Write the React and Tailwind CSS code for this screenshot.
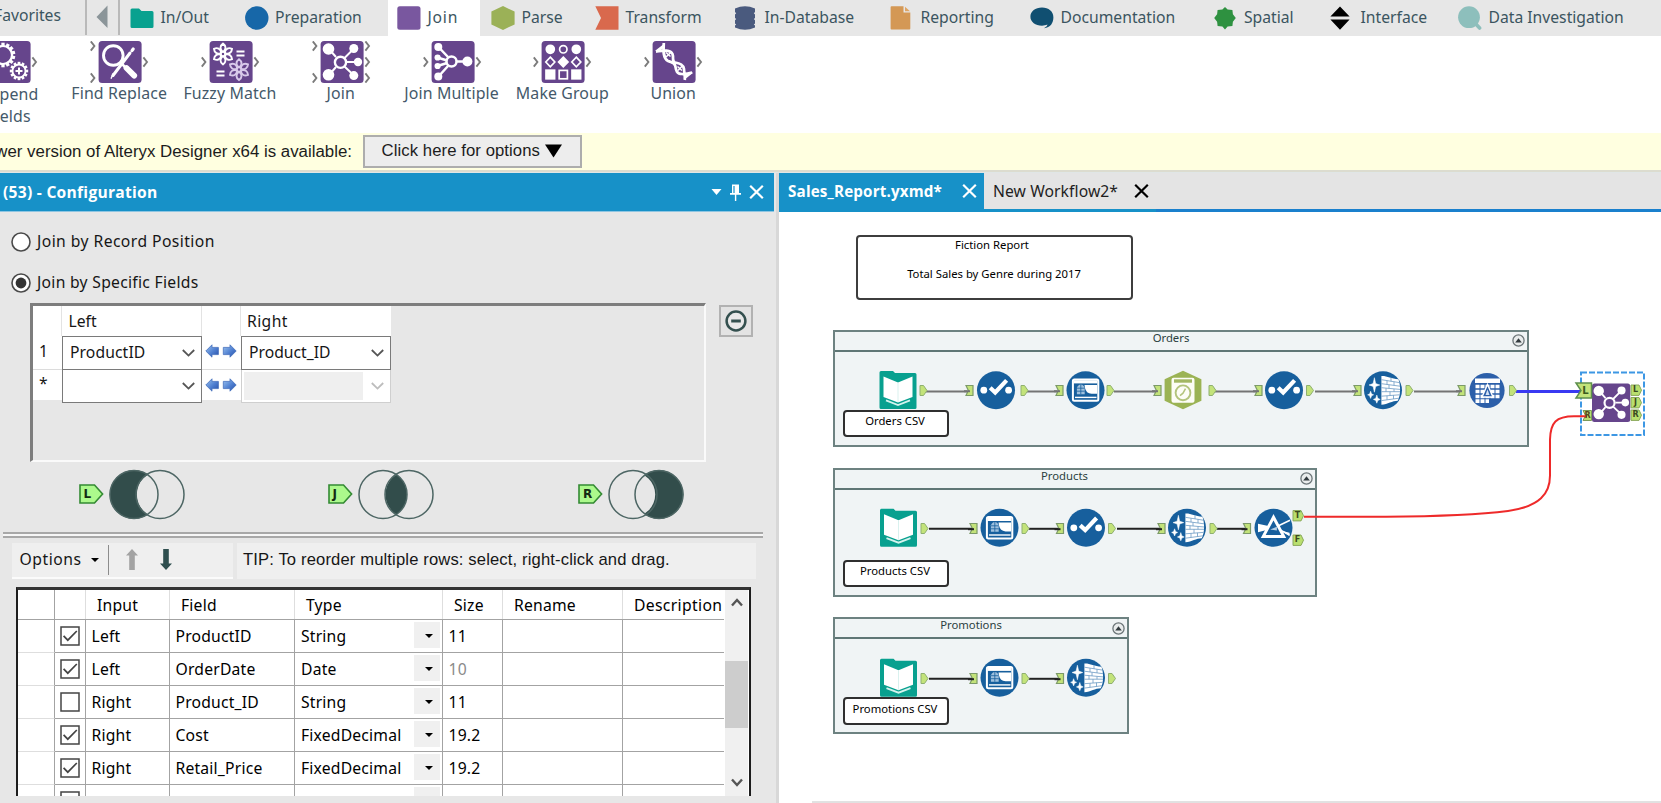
import React from "react";

/* ---------- category tab icons (24 x 24) ---------- */
const tabIcons = {
  inout: (
    <path d="M0.5 4 Q0.5 2.5 2 2.5 H9 L11.5 5 H22 Q23.5 5 23.5 6.5 V20.5 Q23.5 22 22 22 H2 Q0.5 22 0.5 20.5 Z" fill="#08a18f" />
  ),
  prep: <circle cx="11.8" cy="12" r="11.7" fill="#1767a8" />,
  join: <rect x="0.3" y="0.3" width="23.2" height="23.4" rx="2.5" fill="#79579f" />,
  parse: <path d="M12 0 L23.6 5.6 V18.4 L12 24 L0.4 18.4 V5.6 Z" fill="#9bb157" />,
  transform: <path d="M0.3 0.3 H23.5 V23.7 H0.3 L6 12 Z" fill="#d9694d" />,
  indb: (
    <path
      d="M1 2.5 Q11 -2 21 2.5 V6 L19.8 7.2 L21 8.4 V12 L19.8 13 L21 14.2 V17.4 L19.8 18.5 L21 19.6 V21.5 Q11 26 1 21.5 V19.6 L2.2 18.5 L1 17.4 V14.2 L2.2 13 L1 12 V8.4 L2.2 7.2 L1 6 Z"
      fill="#4a5a7e"
    />
  ),
  report: (
    <g>
      <path d="M0.6 1.2 Q0.6 0.3 1.5 0.3 H13.5 V6.6 H20.3 V22.6 Q20.3 23.6 19.4 23.6 H1.5 Q0.6 23.6 0.6 22.6 Z" fill="#d49855" />
      <path d="M15 0.8 L20 5.2 H15 Z" fill="#dfa565" />
    </g>
  ),
  doc: (
    <path d="M12 1.6 C18.6 1.6 23.4 5.4 23.4 11.2 C23.4 17 20.5 21.4 14 22.2 C16 21 17.4 20 17.4 18.6 C15.8 19.4 14 19.7 12 19.7 C5.4 19.7 0.4 16 0.4 10.8 C0.4 5.4 5.4 1.6 12 1.6 Z" fill="#104f71" />
  ),
  spatial: (
    <path
      d="M11 1 L13.6 3.6 L18.4 4 L18.9 8.2 L21.8 12 L18.9 15.8 L18.4 20 L13.6 20.6 L11 23.4 L8.4 20.6 L3.6 20 L3.1 15.8 L0.2 12 L3.1 8.2 L3.6 4 L8.4 3.6 Z"
      fill="#2e9140"
    />
  ),
  iface: <path d="M10 0.6 L19.6 10.4 H0.4 Z M0.4 13.6 H19.6 L10 23.8 Z" fill="#000" />,
  invest: (
    <g>
      <path d="M16 16 L21.6 22" stroke="#8dbfbc" strokeWidth="3.6" strokeLinecap="round" />
      <circle cx="11" cy="11.2" r="10.9" fill="#8dbfbc" />
    </g>
  ),
};

const tabs = [
  ["inout", "In/Out", "w-[114.5px]"],
  ["prep", "Preparation", "w-[152.5px]"],
  ["join", "Join", "w-[91.5px] mr-[2.5px] bg-white"],
  ["parse", "Parse", "w-[104px]"],
  ["transform", "Transform", "w-[139px]"],
  ["indb", "In-Database", "w-[156px]"],
  ["report", "Reporting", "w-[140px]"],
  ["doc", "Documentation", "w-[183.5px]"],
  ["spatial", "Spatial", "w-[116.5px]"],
  ["iface", "Interface", "w-[128px]"],
  ["invest", "Data Investigation", "w-[190px]"],
];

function CategoryBar() {
  return (
    <div className="flex h-9 bg-[#e7e7e7] text-[15.7px] text-[#3b5560]">
      <div className="flex h-8 w-[61px] shrink-0 items-center justify-end">Favorites</div>
      <div className="ml-6 h-[35px] w-[2px] shrink-0 bg-[#b9b9b9]" />
      <svg className="ml-[9px] mt-[5px] h-6 w-3 shrink-0" viewBox="0 0 12 24">
        <path d="M11.5 0.5 V23 L0.5 12 Z" fill="#8b9599" />
      </svg>
      <div className="ml-[10px] h-[35px] w-[2px] shrink-0 bg-[#b9b9b9]" />
      <div className="ml-[1px] flex">
        {tabs.map(([icon, label, cls]) => (
          <div key={icon} className={"flex h-9 shrink-0 items-center gap-[6.5px] whitespace-nowrap pl-[9px] " + cls}>
            <svg className="h-6 w-6 shrink-0" viewBox="0 0 24 24">
              {tabIcons[icon]}
            </svg>
            <span className={icon === "join" ? "tracking-[0.8px]" : ""}>{label}</span>
          </div>
        ))}
      </div>
    </div>
  );
}

/* ---------- tool glyphs, white on a 42 x 42 tile ---------- */
function Gear({ cx, cy, r, teeth, sw }) {
  const marks = [];
  for (let i = 0; i < teeth; i++) {
    marks.push(
      <rect
        key={i}
        x={cx - sw * 0.75}
        y={cy - r - sw * 1.5}
        width={sw * 1.5}
        height={sw * 1.8}
        fill="#fff"
        transform={`rotate(${(360 / teeth) * i} ${cx} ${cy})`}
      />
    );
  }
  return (
    <g>
      {marks}
      <circle cx={cx} cy={cy} r={r} fill="none" stroke="#fff" strokeWidth={sw} />
    </g>
  );
}

function Flower({ cx, cy, color }) {
  return (
    <g stroke={color} fill="none" strokeWidth="1.9">
      {[0, 60, 120, 180, 240, 300].map((a) => (
        <path
          key={a}
          d={`M${cx} ${cy - 10.4} C${cx + 3.4} ${cy - 8} ${cx + 3} ${cy - 5} ${cx + 0.8} ${cy - 2.6} H${cx - 0.8} C${cx - 3} ${cy - 5} ${cx - 3.4} ${cy - 8} ${cx} ${cy - 10.4} Z`}
          transform={`rotate(${a} ${cx} ${cy})`}
        />
      ))}
      <circle cx={cx} cy={cy} r="2.2" />
    </g>
  );
}

const joinGlyph = (
  <g stroke="#fff" strokeWidth="2" fill="#fff">
    <path d="M8 8 L15 16 M8 34 L15 26 M33 7.5 L23.5 17 M33 34.5 L23.5 25.5 M26 21 H36" fill="none" />
    <circle cx="19.5" cy="21.3" r="5.6" fill="none" strokeWidth="2.4" />
    <g stroke="none">
      <circle cx="7.5" cy="8" r="5.8" />
      <circle cx="7.5" cy="33.8" r="5.8" />
      <circle cx="32.8" cy="7.5" r="4.5" />
      <circle cx="37" cy="21" r="4.2" />
      <circle cx="32.8" cy="34.6" r="4.5" />
    </g>
  </g>
);

const glyphs = {
  append: (
    <g>
      <Gear cx={15} cy={14} r={9} teeth={14} sw={2.2} />
      <Gear cx={31} cy={30} r={6.5} teeth={12} sw={1.8} />
      <path d="M31 26.5 V33.5 M27.5 30 H34.5" stroke="#fff" strokeWidth="2" />
    </g>
  ),
  find: (
    <g fill="none" stroke="#fff" strokeLinecap="round">
      <circle cx="14.3" cy="14.5" r="9.8" strokeWidth="2.9" />
      <path d="M22 22 L26 26" strokeWidth="2.5" />
      <path d="M27.5 27 L35.2 34.6" strokeWidth="5.8" />
      <path d="M14 34.5 L31 12" strokeWidth="3" />
      <path d="M12.2 37.2 L14 32.8" strokeWidth="1.4" />
      <path d="M33 9.6 L34.2 8" strokeWidth="3.2" />
    </g>
  ),
  fuzzy: (
    <g>
      <Flower cx={13} cy={13} color="#fff" />
      <Flower cx={29} cy={28.6} color="#d8c9ea" />
      <path d="M26.5 10.5 H34.5 M26.5 14.5 H34.5 M6.5 30.5 H14.5 M6.5 34.5 H14.5" stroke="#fff" strokeWidth="2" />
    </g>
  ),
  join: joinGlyph,
  multi: (
    <g stroke="#fff" strokeWidth="2.5" fill="#fff">
      <path d="M6.5 6 L16 16 M5.5 16.5 L15 19.5 M5.5 25 L15 22 M6.5 35.5 L16 25 M25 20.5 H34" fill="none" />
      <circle cx="19.5" cy="20.5" r="5" fill="none" />
      <g stroke="none">
        <circle cx="6.3" cy="6" r="4" />
        <circle cx="5.6" cy="16.5" r="3.1" />
        <circle cx="5.6" cy="25" r="3.1" />
        <circle cx="6.3" cy="35.6" r="4" />
        <circle cx="35.4" cy="20.5" r="5" />
      </g>
    </g>
  ),
  group: (
    <g fill="#fff" stroke="#fff" strokeWidth="1.7">
      <circle cx="8.3" cy="8.3" r="4" />
      <circle cx="21.3" cy="8.3" r="3.7" fill="none" />
      <circle cx="34.3" cy="8.3" r="4" />
      <path d="M8.3 16.2 L12.8 21 L8.3 25.8 L3.8 21 Z" fill="none" />
      <path d="M21.3 16.2 L26 21 L21.3 25.8 L16.6 21 Z" />
      <path d="M34.3 16.2 L38.8 21 L34.3 25.8 L29.8 21 Z" fill="none" />
      <rect x="4" y="29.2" width="8.6" height="8.6" />
      <rect x="17.2" y="29.4" width="8.2" height="8.4" fill="none" />
      <rect x="30" y="29.2" width="8.6" height="8.6" />
    </g>
  ),
  union: (
    <g fill="none" stroke="#fff" strokeWidth="2.7">
      <path d="M3 10.6 C8 10 17 7.5 19.5 13 C21 17 18.5 20 22 21.5 C26 22.5 30.5 23 31 28 C31.2 32 32.2 35 31.8 39" />
      <path d="M10.8 2 C10.2 10 10 17.5 15 20 C19 21.5 21.5 21 22.3 25 C23 29 23.5 33 29 33 C33 33.2 36 32.5 39 31.5" />
      <path d="M3 10.4 L10.5 4.5 M32 37 L39.2 31.2" strokeWidth="2" />
      <path d="M6.5 9.3 L10 6 M32.5 35.5 L36 32.5" strokeWidth="2" />
      <path d="M13 11.5 L17.5 15.5 M13 16 L17.8 11.5 M24.5 25.5 L29 29.5 M25 29.6 L29 25.3" strokeWidth="1.5" />
    </g>
  ),
};

const tools = [
  ["append", "Append Fields", [], [21]],
  ["find", "Find Replace", [5, 37], [21]],
  ["fuzzy", "Fuzzy Match", [21], [21]],
  ["join", "Join", [5, 37], [5, 21, 37]],
  ["multi", "Join Multiple", [21], [21]],
  ["group", "Make Group", [21], [21]],
  ["union", "Union", [21], [21]],
];

function ToolTray() {
  return (
    <div className="-ml-[46px] flex h-[96.5px] bg-white pt-[5px] text-[15.9px] leading-[21px] tracking-[0.12px] text-[#44596a]">
      {tools.map(([id, label, ins, outs]) => (
        <div key={id} className="flex w-[110.8px] shrink-0 flex-col items-center">
          <svg className="h-[42px] w-[62px]" viewBox="-10 0 62 42">
            <g transform="translate(0 0)">
              <rect x="-0.4" y="0" width="43" height="42" rx="3.5" fill="#66458c" />
              {glyphs[id]}
              <g fill="none" stroke="#7b7b7b" strokeWidth="1.9">
                {ins.map((y) => (
                  <path key={"i" + y} d={`M-8.2 ${y - 4.6} L-4.6 ${y} L-8.2 ${y + 4.6}`} />
                ))}
                {outs.map((y) => (
                  <path key={"o" + y} d={`M44.4 ${y - 4.6} L48 ${y} L44.4 ${y + 4.6}`} />
                ))}
              </g>
            </g>
          </svg>
          <div className={"text-center " + (id === "append" ? "w-16 pr-px pt-px leading-[21.5px]" : "whitespace-nowrap pr-[2px]")}>{label}</div>
        </div>
      ))}
    </div>
  );
}

function UpdateBanner() {
  return (
    <div className="flex h-[39px] items-center border-b-2 border-[#dcdccf] bg-[#ffffe0] font-['Liberation_Sans',sans-serif] text-[16.7px] text-[#1c1c1c]">
      <div className="flex w-[352px] shrink-0 justify-end whitespace-nowrap pt-[2px] text-[16.85px]">A newer version of Alteryx Designer x64 is available:</div>
      <button className="ml-[10.5px] flex h-[33px] w-[219px] items-center border-2 border-[#adadad] bg-[#ededed] pb-px pl-[17px]">
        <span className="whitespace-nowrap tracking-[0.08px]">Click here for options</span>
        <svg className="ml-[5px] h-[14px] w-[17px]" viewBox="0 0 17 14">
          <path d="M0 0.5 H17 L8.5 13.5 Z" fill="#000" />
        </svg>
      </button>
    </div>
  );
}

/* ---------- configuration panel ---------- */
function Cross({ className }) {
  return (
    <svg className={"h-[14px] w-[15px] shrink-0 " + className} viewBox="0 0 15 14">
      <path d="M1.2 0.8 L13.8 13.2 M13.8 0.8 L1.2 13.2" stroke="currentColor" strokeWidth="2.2" />
    </svg>
  );
}

function Radio({ checked, children }) {
  return (
    <div className="flex h-[41px] items-center gap-[6px] pl-[11px]">
      <svg className="h-5 w-5" viewBox="0 0 20 20">
        <circle cx="10" cy="10" r="9" fill="#fff" stroke="#4a4a4a" strokeWidth="1.6" />
        {checked && <circle cx="10" cy="10" r="5.4" fill="#333" />}
      </svg>
      <span className={"-mt-px " + (checked ? "tracking-[0.28px]" : "tracking-[0.43px]")}>{children}</span>
    </div>
  );
}

function Chevron({ className }) {
  return (
    <svg className={"h-2 w-[13px] shrink-0 " + className} viewBox="0 0 13 8">
      <path d="M0.8 1 L6.5 6.6 L12.2 1" fill="none" stroke="currentColor" strokeWidth="1.8" />
    </svg>
  );
}

function SwapArrows() {
  return (
    <svg className="-ml-[2px] h-[14px] w-8" viewBox="0 0 32 14">
      <defs>
        <linearGradient id="arrowBlue" x1="0" y1="0" x2="1" y2="1">
          <stop offset="0" stopColor="#9cc4f0" />
          <stop offset="0.55" stopColor="#4f7fd0" />
          <stop offset="1" stopColor="#274fa8" />
        </linearGradient>
      </defs>
      <path d="M0.8 7 L7 0.8 V3.4 H13.4 V10.6 H7 V13.2 Z" fill="url(#arrowBlue)" stroke="#4570bd" strokeWidth="0.8" />
      <path d="M31.2 7 L25 0.8 V3.4 H18.3 V10.6 H25 V13.2 Z" fill="url(#arrowBlue)" stroke="#4570bd" strokeWidth="0.8" />
    </svg>
  );
}

function JoinFields() {
  return (
    <div className="ml-[30px] flex items-start gap-[13px]">
      <div className="h-[159px] w-[676px] border-b-2 border-l-[3px] border-r-2 border-t-[3px] border-b-[#fafafa] border-l-[#7d7d7d] border-r-[#fafafa] border-t-[#7d7d7d]">
        <div className="grid w-[358px] grid-cols-[29px_140px_39px_150px] grid-rows-[30px_34px_33px]">
          <div className="border-r border-[#e3e3e3] bg-white" />
          <div className="flex items-center border-r border-[#e3e3e3] bg-white pl-[6.5px] pt-[2px]">Left</div>
          <div className="border-r border-[#e3e3e3] bg-white" />
          <div className="flex items-center bg-white pl-[6px] pt-[2px] tracking-[0.4px]">Right</div>

          <div className="border-b border-[#dcdcdc] bg-white pl-[6px] pt-[4px]">1</div>
          <div className="flex items-center justify-between border border-[#7a7a7a] bg-white pl-[7px] pr-[6px] pt-px tracking-[0.1px]">
            ProductID
            <Chevron className="text-[#555]" />
          </div>
          <div className="flex items-center justify-center border-b border-[#dcdcdc] bg-white pb-[3px]">
            <SwapArrows />
          </div>
          <div className="flex items-center justify-between border border-[#7a7a7a] bg-white pl-[7px] pr-[6px] pt-px">
            Product_ID
            <Chevron className="text-[#555]" />
          </div>

          <div className="mb-[3px] bg-white pl-[6px] pt-[2px] leading-[22px]">*</div>
          <div className="flex items-center justify-end border border-t-0 border-[#7a7a7a] bg-white pr-[6px]">
            <Chevron className="text-[#555]" />
          </div>
          <div className="mb-[3px] flex items-center justify-center bg-white">
            <SwapArrows />
          </div>
          <div className="flex items-center justify-between border border-t-0 border-[#cfcfcf] bg-white py-[2px] pl-[2px] pr-[6px]">
            <div className="h-full w-[119px] bg-[#efefef]" />
            <Chevron className="text-[#bdbdbd]" />
          </div>
        </div>
      </div>
      <button className="mt-[2px] flex h-8 w-[34px] items-center justify-center border-2 border-[#b2b2b2] bg-[#e3e3e3]">
        <svg className="h-[22px] w-[22px]" viewBox="0 0 22 22">
          <circle cx="11" cy="11" r="9.4" fill="#e9e9e9" stroke="#34504f" strokeWidth="2.5" />
          <path d="M6.2 11 H15.8" stroke="#34504f" strokeWidth="3" />
        </svg>
      </button>
    </div>
  );
}

function Venn({ kind }) {
  const left = "M25 1 A24 24 0 1 0 25 49 A24 24 0 1 0 25 1 Z";
  return (
    <div className="flex items-center gap-[5px]">
      <div className="relative h-5 w-[25px]">
        <svg className="absolute inset-0 h-5 w-[25px]" viewBox="0 0 25 20">
          <path d="M1 1 H15.5 L23.6 10 L15.5 19 H1 Z" fill="#acf98c" stroke="#338a33" strokeWidth="1.6" />
        </svg>
        <span className="absolute left-[5px] top-[2px] font-['DejaVu_Sans',sans-serif] text-[12px] font-bold leading-4 text-[#152b12]">{kind}</span>
      </div>
      <svg className="h-[51px] w-[76px]" viewBox="0 0 76 50">
        <defs>
          <clipPath id={"clip" + kind}>
            <circle cx="51" cy="25" r="23.6" />
          </clipPath>
        </defs>
        <g fill="none" stroke="#4d6664" strokeWidth="1.5">
          {kind === "L" && (
            <>
              <circle cx="25" cy="25" r="24.4" fill="#324d4b" stroke="none" />
              <circle cx="51" cy="25" r="23.2" fill="#e7e7e7" stroke="none" />
            </>
          )}
          {kind === "R" && (
            <>
              <circle cx="51" cy="25" r="24.4" fill="#324d4b" stroke="none" />
              <circle cx="25" cy="25" r="22.2" fill="#e7e7e7" stroke="none" />
            </>
          )}
          {kind === "J" && <path d={left} fill="#324d4b" stroke="none" clipPath="url(#clipJ)" />}
          <circle cx="25" cy="25" r="24" />
          <circle cx="51" cy="25" r="24" />
        </g>
      </svg>
    </div>
  );
}

const rows = [
  [true, "Left", "ProductID", "String", "11"],
  [true, "Left", "OrderDate", "Date", "10"],
  [false, "Right", "Product_ID", "String", "11"],
  [true, "Right", "Cost", "FixedDecimal", "19.2"],
  [true, "Right", "Retail_Price", "FixedDecimal", "19.2"],
  [false, "", "", "", ""],
];

function Check({ on }) {
  return (
    <svg className="h-5 w-5" viewBox="0 0 20 20">
      <rect x="1" y="1" width="18" height="18" fill="#fff" stroke="#444" strokeWidth="1.5" />
      {on && <path d="M3.6 9.8 L7.8 14.2 L16.8 5" fill="none" stroke="#444" strokeWidth="1.7" />}
    </svg>
  );
}

function FieldTable() {
  const cols = "grid grid-cols-[37px_31px_84px_125px_148px_60px_120px_101px]";
  const head = "flex items-center border-r border-[#dedede] pl-[11px] pt-[2px]";
  const cell = "flex items-center border-b border-r border-[#a3a3a3] pl-[5.5px] pt-px";
  return (
    <div className="ml-4 flex h-[208.5px] w-[735px] overflow-hidden border-x-2 border-t-[3px] border-[#1d1d1d] border-t-[#333] bg-white tracking-[0.2px] text-black">
      <div className="h-full w-[706px] shrink-0 overflow-hidden">
        <div className={cols + " h-[30px] border-b border-[#a3a3a3]"}>
          <div className="border-r border-[#a3a3a3]" />
          <div className="border-r border-[#dedede]" />
          <div className={head}>Input</div>
          <div className={head}>Field</div>
          <div className={head}>Type</div>
          <div className={head}>Size</div>
          <div className={head}>Rename</div>
          <div className="flex items-center pl-[11px] pt-[2px] tracking-[0.35px]">Description</div>
        </div>
        {rows.map(([on, side, field, type, size], i) => (
          <div key={i} className={cols + " h-[33px]"}>
            <div className="border-b border-r border-b-[#dedede] border-r-[#a3a3a3]" />
            <div className="flex items-center justify-center border-b border-r border-[#a3a3a3] pr-px">
              <Check on={on} />
            </div>
            <div className={cell}>{side}</div>
            <div className={cell}>{field}</div>
            <div className="flex items-center border-b border-r border-[#a3a3a3] pl-[6px] pr-[2px]">
              <span className="pt-px">{type}</span>
              <div className="mb-[3px] ml-auto flex h-[26px] w-[26px] items-center justify-center bg-[#f0f0f0] pl-[3px] pt-[3px]">
                <svg className="h-1 w-2" viewBox="0 0 8 4">
                  <path d="M0 0 H8 L4 4 Z" fill="#000" />
                </svg>
              </div>
            </div>
            <div className={cell + (size === "10" ? " text-[#8a8a8a]" : "")}>{size}</div>
            <div className={cell} />
            <div className="border-b border-[#a3a3a3]" />
          </div>
        ))}
      </div>
      <div className="ml-px flex h-full w-[23px] flex-col items-center bg-[#f0f0f0]">
        <svg className="mt-[8px] h-[9px] w-[12px]" viewBox="0 0 12 9">
          <path d="M1 7.5 L6 2 L11 7.5" fill="none" stroke="#555" strokeWidth="2.4" />
        </svg>
        <div className="mt-[54px] h-[67px] w-full bg-[#cdcdcd]" />
        <svg className="mt-[50px] h-[9px] w-[12px]" viewBox="0 0 12 9">
          <path d="M1 1.5 L6 7 L11 1.5" fill="none" stroke="#555" strokeWidth="2.4" />
        </svg>
      </div>
    </div>
  );
}

function ConfigPanel() {
  return (
    <div className="h-full w-[774px] shrink-0 bg-[#e7e7e7] text-[15.7px] text-[#161616]">
      <div className="flex h-[39px] items-center border-b border-[#8fc6e2] bg-[#1791c8] pl-[3px] pr-[10px] text-white">
        <div className="grow pt-px font-['Open_Sans',sans-serif] text-[15.6px] font-bold tracking-[0.27px]">(53) - Configuration</div>
        <svg className="h-[6px] w-[11px]" viewBox="0 0 11 6">
          <path d="M0.5 0 H10.5 L5.5 6 Z" fill="#fff" />
        </svg>
        <svg className="ml-[8px] mr-[8px] h-[17px] w-[11px]" viewBox="0 0 11 17">
          <path d="M2 0.5 H9 V9 H11 V10.8 H0 V9 H2 Z M4.9 10 H6.3 V17 H4.9 Z" fill="#fff" />
          <path d="M4 2 V9" stroke="#1791c8" strokeWidth="1.2" />
        </svg>
        <Cross className="" />
      </div>
      <div className="pt-[9.5px]">
        <Radio>Join by Record Position</Radio>
        <Radio checked>Join by Specific Fields</Radio>
      </div>
      <div className="-mt-[1px]">
        <JoinFields />
      </div>
      <div className="flex pl-[78.5px] pt-[7px]">
        <div className="w-[249px]">
          <Venn kind="L" />
        </div>
        <div className="w-[250.5px]">
          <Venn kind="J" />
        </div>
        <Venn kind="R" />
      </div>
      <div className="ml-[3px] mt-[12.5px] h-[6px] w-[760px] border-y-2 border-[#a8a8a8] bg-[#f6f6f6]" />
      <div className="ml-[11.5px] mt-[4.5px] flex h-9 gap-[4px]">
        <div className="flex w-[221px] items-center border-b-2 border-[#fbfbfb] bg-[#efefef] pl-2">
          <span className="pt-px tracking-[0.55px]">Options</span>
          <svg className="ml-[9px] h-1 w-2" viewBox="0 0 8 4">
            <path d="M0 0 H8 L4 4 Z" fill="#000" />
          </svg>
          <div className="ml-[9px] h-[30px] w-[1.5px] bg-[#8c8c8c]" />
          <svg className="ml-[17px] h-[21px] w-3" viewBox="0 0 12 21">
            <path d="M6 0 L12 6.5 H8.8 V21 H3.2 V6.5 H0 Z" fill="#a3a3a3" />
          </svg>
          <svg className="ml-[22px] h-[21px] w-3" viewBox="0 0 12 21">
            <path d="M6 21 L12 14.5 H8.8 V0 H3.2 V14.5 H0 Z" fill="#2f4f4f" />
          </svg>
        </div>
        <div className="flex w-[519px] items-center whitespace-nowrap bg-[#efefef] pl-[6.5px] font-['Liberation_Sans',sans-serif] text-[16.6px] tracking-[0.14px]">
          TIP: To reorder multiple rows: select, right-click and drag.
        </div>
      </div>
      <div className="h-[8.5px]" />
      <FieldTable />
    </div>
  );
}

/* ---------- workflow canvas ---------- */
const OX = 779;
const OY = 212.5;
const at = (x, y, w, h) => ({ left: x - OX, top: y - OY, width: w, height: h });

const containers = [
  { title: "Orders", x: 833, y: 330, w: 696, h: 117, tx: 1171 },
  { title: "Products", x: 833, y: 468, w: 483.5, h: 129, tx: 1064.5 },
  { title: "Promotions", x: 833, y: 617.5, w: 296, h: 117, tx: 971 },
];

const notes = [
  { text: "Orders CSV", x: 843, y: 410 },
  { text: "Products CSV", x: 843, y: 560 },
  { text: "Promotions CSV", x: 843, y: 697.5 },
];

const nodes = [
  ["book", 898, 390.5],
  ["select", 996, 390.7],
  ["formula", 1085.5, 390.7],
  ["date", 1183, 390.7],
  ["select", 1284, 390.7],
  ["cleanse", 1383, 390.7],
  ["table", 1487, 391],
  ["book", 898.5, 528.2],
  ["formula", 999.5, 528.3],
  ["select", 1086, 528.3],
  ["cleanse", 1187, 528.3],
  ["filter", 1273.5, 528.3],
  ["book", 898.5, 678.2],
  ["formula", 999.5, 678.2],
  ["cleanse", 1086, 678.2],
];

const wires = [
  [926, 967, 392, "#747474"],
  [1027, 1057, 392, "#747474"],
  [1114, 1155, 392, "#747474"],
  [1215, 1258, 392, "#747474"],
  [1315, 1355, 392, "#747474"],
  [1414, 1460, 392, "#747474"],
  [929, 973, 529.3, "#222"],
  [1029, 1060, 529.3, "#222"],
  [1117, 1161, 529.3, "#222"],
  [1217, 1247, 529.3, "#222"],
  [929, 973, 679.3, "#222"],
  [1029, 1060, 679.3, "#222"],
];

const outPorts = [
  [920, 391], [1021, 391], [1107, 391], [1209, 391], [1306.5, 391], [1406, 391], [1509.5, 391],
  [921, 529], [1022, 529], [1108.5, 529], [1210, 529],
  [921, 679], [1022, 679], [1108.5, 679],
];
const inPorts = [
  [966, 391], [1056, 391], [1154, 391], [1255, 391], [1354, 391], [1458, 391],
  [970, 529], [1056.5, 529], [1158, 529], [1243.5, 529],
  [970, 679], [1056.5, 679],
];

const disc = <circle r="19" fill="#175f9d" />;
const nodeArt = {
  book: (
    <g>
      <path d="M-18.5 -17.5 Q-18.5 -19 -17 -19 H-5 L-3 -17 H17 Q18.5 -17 18.5 -15.5 V17.5 Q18.5 19 17 19 H-17 Q-18.5 19 -18.5 17.5 Z" fill="#08a08f" />
      <path d="M-14.5 -13.5 L0 -7.5 L14.5 -13.5 V7 L0 12.6 L-14.5 7 Z" fill="#fff" />
      <path d="M0 -7.5 V12" stroke="#cfeeea" strokeWidth="0.8" />
      <path d="M-12 10.4 L0 15 L12 10.4" fill="none" stroke="#d4f3ee" strokeWidth="1.8" />
    </g>
  ),
  select: (
    <g>
      {disc}
      <circle cx="-12.2" cy="0" r="3.4" fill="#fff" />
      <circle cx="12.6" cy="0" r="3.4" fill="#fff" />
      <path d="M-5.8 -2.4 L-0.8 2.3 L10.6 -9.8" fill="none" stroke="#fff" strokeWidth="4.2" />
    </g>
  ),
  formula: (
    <g>
      {disc}
      <rect x="-12.6" y="-10.8" width="25.4" height="21.4" rx="1.5" fill="#175f9d" stroke="#fff" strokeWidth="2" />
      <path d="M-12 -8.4 H12" stroke="#fff" strokeWidth="3.2" />
      <path d="M-1 -5.2 H11.6 V3.6 H6 Q0.6 3 -0.4 -2 Z" fill="#fff" />
      <path d="M-8.6 4 V-2.5 Q-7.5 -5.6 -4.7 -5.8 Q-1.8 -5.6 -0.8 -2.5 V4 Z" fill="#9fc0dd" />
      <path d="M-8.6 -2 H-0.8 M-8.6 1 H-0.8 M-4.7 -6 V4" stroke="#175f9d" strokeWidth="0.8" />
      <path d="M-10.5 7.2 H11" stroke="#fff" strokeWidth="1.4" />
    </g>
  ),
  date: (
    <g>
      <path d="M0 -19.5 L18.4 -11 V10.6 L0 19 L-18.4 10.6 V-11 Z" fill="#9bb354" />
      <rect x="-11.5" y="-12.5" width="23" height="25" rx="2" fill="#fdfdf6" />
      <path d="M-9 -9.2 H9" stroke="#a3b763" strokeWidth="3.4" />
      <circle cy="2.6" r="7.4" fill="none" stroke="#b3c47c" strokeWidth="1.9" />
      <path d="M2.5 -1.5 L0 3 L-3 5.5" fill="none" stroke="#b3c47c" strokeWidth="1.5" />
    </g>
  ),
  cleanse: (
    <g>
      {disc}
      <path d="M-8.6 -12.5 L-7.3 -6.6 L-3.2 -5.2 L-7.3 -3.8 L-8.6 2 L-9.9 -3.8 L-14 -5.2 L-9.9 -6.6 Z M-12.4 1 L-11.4 3.8 L-9.4 4.6 L-11.4 5.6 L-12.4 8.2 L-13.4 5.6 L-15.4 4.6 L-13.4 3.8 Z M-6.2 4.8 L-5.2 8 L-2.8 9.2 L-5.2 10.3 L-6.2 13 L-7.2 10.3 L-9.6 9.2 L-7.2 8 Z" fill="#fff" stroke="#fff" strokeWidth="0.5" />
      <path d="M-1.6 -14.2 C4 -14.5 8 -11.5 15.5 -11 C17.5 -5 18 4 14.8 10.5 C9 10.5 5 14 -1.6 14.5 Z" fill="#fff" />
      <g fill="none" stroke="#6c9ac4" strokeWidth="0.8">
        <path d="M-1.6 -10.5 L17 -7.5 M-1.6 -6.5 L17 -4 M-1.6 -2.5 L17 -0.8 M-1.6 1.5 H17 M-1.6 6 L16.5 4.6 M-1.6 10.4 L16 8" />
        <path d="M8 -12.5 V-8.8 M4 -9.5 V-5.6 M11 -8.5 V-4.8 M6 -5.4 V-1.8 M3 -2 V1.5 M11 -1.2 V1.5 M7 1.5 V5.3 M4 5.6 V9.6 M10.5 5 V8.8" />
      </g>
    </g>
  ),
  table: (
    <g>
      <circle r="17.6" fill="#2c5fa9" />
      <path d="M-12 -12 H13 V-7.5 H-12 Z" fill="#fff" />
      <path d="M-11.5 -4 H12.5 M-11.5 1 H12.5 M-11.5 6 H12.5 M-11.5 10.6 H2" stroke="#fff" strokeWidth="3.6" strokeDasharray="4 1" />
      <path d="M0.5 -6 L6 6.5 H-5 Z" fill="#2c5fa9" stroke="#fff" strokeWidth="1.4" />
      <path d="M0.5 -1 L2.5 4.5 H-1.5 Z" fill="#d6e2f4" />
    </g>
  ),
  filter: (
    <g>
      {disc}
      <path d="M-15.5 -4 L-4 -1.5 V1.5 L-15.5 4.5 Z" fill="#fff" />
      <path d="M5 -2 L16.5 -7.5 M5 1.5 L16 7" stroke="#fff" strokeWidth="1.6" />
      <path d="M7.5 3 L16 5 V8.5 Z" fill="#fff" />
      <path d="M0 -10.5 L10.2 8.6 H-10.2 Z" fill="#175f9d" stroke="#fff" strokeWidth="3" />
      <path d="M-3.4 1.6 L3.4 -1 V2.6 L-3.4 1.8 Z" fill="#b4cfe6" />
    </g>
  ),
};

const letterPorts = [
  ["T", 1293, 511], ["F", 1293, 535.5],
  ["L", 1631, 385.5], ["J", 1631, 398], ["R", 1631, 410.5],
];

function Canvas() {
  return (
    <div className="relative grow overflow-hidden bg-white font-['Noto_Sans',sans-serif] text-[11.3px] leading-[14px] text-black">
      <div className="absolute rounded-[4px] border-2 border-[#3d3d3d] bg-white text-center" style={at(855.5, 235, 277, 65)}>
        <div className="pr-1 pt-px">Fiction Report</div>
        <div className="pt-[15.5px]">Total Sales by Genre during 2017</div>
      </div>

      {containers.map((c) => (
        <div key={c.title} className="absolute border-2 border-[#6d8281] bg-[#f0f4f5]" style={at(c.x, c.y, c.w, c.h)}>
          <div className="flex h-[20px] items-center justify-end border-b-2 border-[#5f7675] pr-[2px]">
            <svg className="h-[13px] w-[13px]" viewBox="0 0 13 13">
              <circle cx="6.5" cy="6.5" r="5.6" fill="#e9ecec" stroke="#6c7578" strokeWidth="1.3" />
              <path d="M3.2 8.5 L6.5 4.2 L9.8 8.5 Z" fill="#333b3f" />
            </svg>
          </div>
        </div>
      ))}
      {containers.map((c) => (
        <div key={c.title} className="absolute text-center text-[#2b3f3f]" style={at(c.tx - 50, c.y + 1, 100, 14)}>
          {c.title}
        </div>
      ))}

      <svg className="absolute inset-0 h-[591px] w-[882px]" viewBox="779 212.5 882 591">
        {wires.map(([a, b, y, color]) => (
          <path key={a + "-" + y} d={`M${a} ${y} H${b}`} stroke={color} strokeWidth="2" />
        ))}
        <path d="M1516 392 H1581" stroke="#3939f2" strokeWidth="3" />
        {outPorts.map(([x, y]) => (
          <path key={x + "-" + y} d={`M${x} ${y - 5} H${x + 3.5} L${x + 7} ${y} L${x + 3.5} ${y + 5} H${x} Z`} fill="#c3e37a" stroke="#8fb070" strokeWidth="1" />
        ))}
        {inPorts.map(([x, y]) => (
          <path key={x + "-" + y} d={`M${x} ${y - 5} H${x + 7} V${y + 5} H${x} L${x + 2.4} ${y} Z`} fill="#c3e37a" stroke="#7c9a68" strokeWidth="1.2" />
        ))}
        {inPorts.map(([x, y]) => (
          <path key={x + "w" + y} d={`M${x - 2} ${y + 0.7} H${x + 4}`} stroke={y === 391 ? "#747474" : "#222"} strokeWidth="2" />
        ))}
        {nodes.map(([kind, x, y]) => (
          <g key={kind + x + y} transform={`translate(${x} ${y})`}>
            {nodeArt[kind]}
          </g>
        ))}
        {letterPorts.map(([l, x, y]) => (
          <path key={l + y} d={`M${x} ${y} H${x + 8} L${x + 10.5} ${y + 5.2} L${x + 8} ${y + 10.4} H${x} Z`} fill="#b9df6e" stroke="#8aa85c" strokeWidth="1" />
        ))}
        <rect x="1581" y="373" width="63" height="62.5" fill="none" stroke="#3d97e4" strokeWidth="2" strokeDasharray="6 2" />
        <rect x="1592" y="384" width="38.2" height="38.4" rx="2.5" fill="#66458c" />
        <g transform="translate(1592 384.2) scale(0.9)">{joinGlyph}</g>
        <path d="M1576 383.5 H1591.5 V398.5 H1576 L1581 391 Z" fill="#c3e37a" stroke="#5d8f4d" strokeWidth="1.5" />
        <path d="M1583 411 H1591.5 V421 H1583 L1585.5 416 Z" fill="#b9df6e" stroke="#7c9a58" strokeWidth="1" />
        <path
          d="M1304 517.3 H1386 C1440 516.8 1480 515 1508 511.5 C1540 507 1550 494 1550 476 V440 C1550.5 423 1556 416.8 1574 416.8 H1587"
          fill="none"
          stroke="#ee2a2a"
          strokeWidth="2"
        />
        <path d="M812 802.5 H1661" stroke="#c4c4c4" strokeWidth="1" />
      </svg>

      {letterPorts.map(([l, x, y]) => (
        <div key={l + y} className="absolute text-center font-['DejaVu_Sans',sans-serif] text-[8px] font-bold leading-[10px] text-[#3c4a20]" style={at(x, y, 9, 10)}>
          {l}
        </div>
      ))}
      <div className="absolute text-center font-['DejaVu_Sans',sans-serif] text-[10px] font-bold leading-[14px] text-[#3c5a20]" style={at(1581, 384, 9, 14)}>
        L
      </div>
      <div className="absolute text-center font-['DejaVu_Sans',sans-serif] text-[8px] font-bold leading-[10px] text-[#5a4a20]" style={at(1583, 411, 9, 10)}>
        R
      </div>

      {notes.map((n) => (
        <div key={n.text} className="absolute rounded-[4px] border-2 border-[#2f2f2f] bg-white pr-[2px] pt-[2.5px] text-center" style={at(n.x, n.y, 106, 27.5)}>
          {n.text}
        </div>
      ))}
    </div>
  );
}

function Workspace() {
  return (
    <div className="flex h-full grow flex-col">
      <div className="flex h-9 shrink-0 bg-[#e4e4e4]">
        <div className="flex w-[204.5px] items-center bg-[#1791c8] pl-[9px] font-['Open_Sans',sans-serif] text-[15.2px] font-bold tracking-[0.17px] text-white">
          <span className="w-[174px] whitespace-nowrap">Sales_Report.yxmd*</span>
          <Cross className="" />
        </div>
        <div className="flex items-center pl-[9.5px] text-[15.7px] text-[#1f1f1f]">
          <span className="w-[141px] whitespace-nowrap pt-px tracking-[0.07px]">New Workflow2*</span>
          <Cross className="text-black" />
        </div>
      </div>
      <div className="flex h-[3px] shrink-0">
        <div className="w-[377px] bg-[#1791c8]" />
        <div className="grow bg-[#1a80cd]" />
      </div>
      <Canvas />
    </div>
  );
}

export default function App() {
  return (
    <div className="flex h-[803px] w-[1661px] flex-col overflow-hidden bg-white font-['Noto_Sans',sans-serif]">
      <CategoryBar />
      <ToolTray />
      <UpdateBanner />
      <div className="h-[1.5px] shrink-0 bg-[#e0e6e6]" />
      <div className="flex min-h-0 grow">
        <ConfigPanel />
        <div className="w-[5px] shrink-0 border-l-2 border-[#e7e7e7] bg-[#d8d8d8]" />
        <Workspace />
      </div>
    </div>
  );
}
